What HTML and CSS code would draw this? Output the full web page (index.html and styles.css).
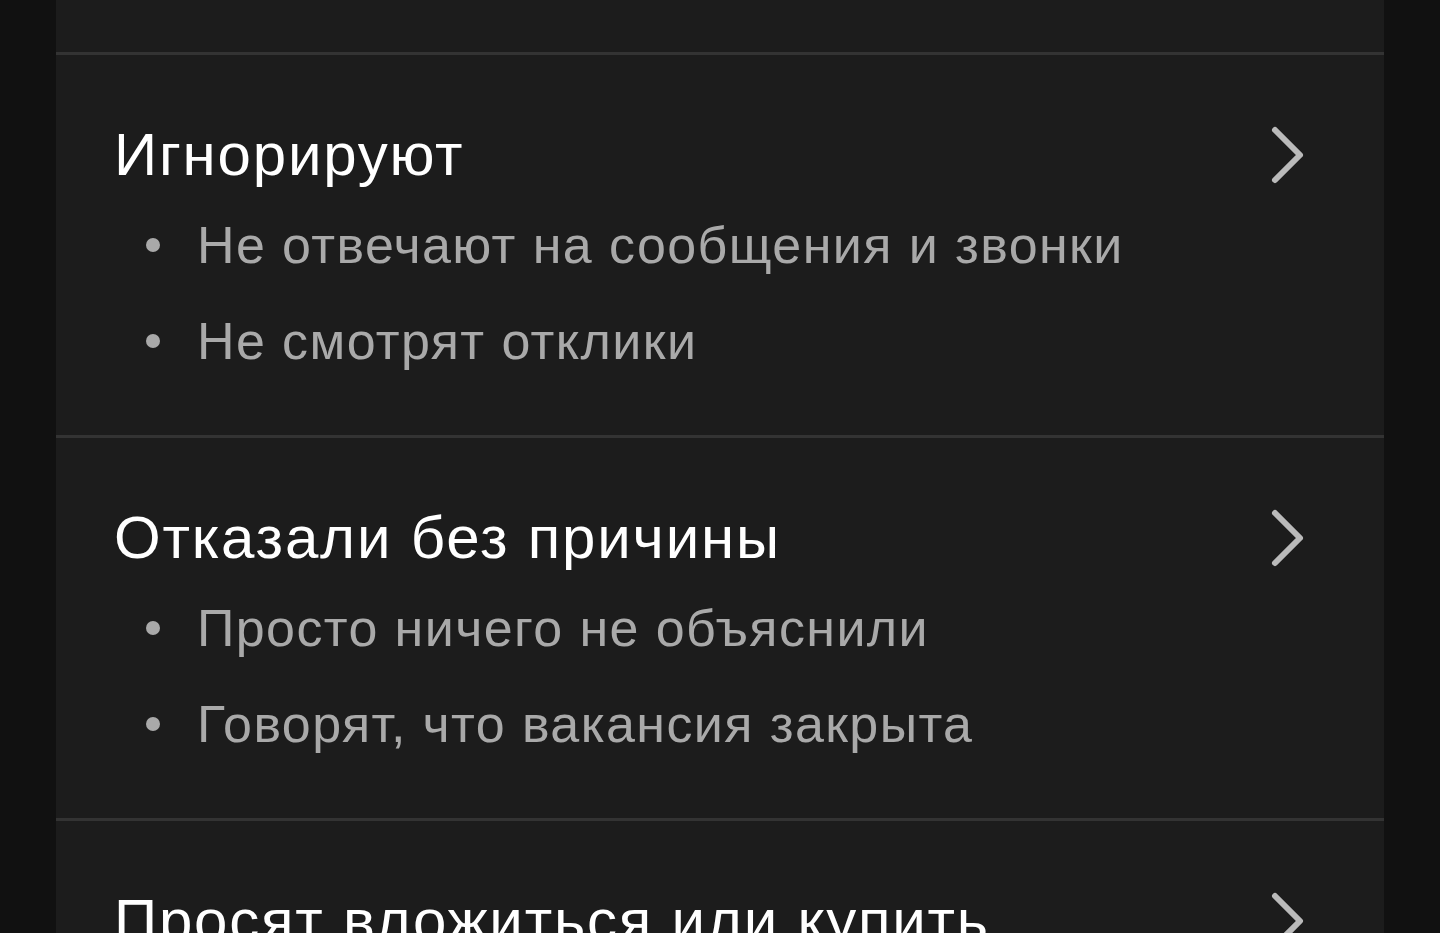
FILE: index.html
```html
<!DOCTYPE html>
<html lang="ru">
<head>
<meta charset="utf-8">
<link rel="stylesheet" href="styles.css">
</head>
<body>
<div class="page">
  <div class="panel">
    <div class="top-gap"></div>
    <section class="item">
      <div class="head">
        <h2 class="title">Игнорируют</h2>
        <svg class="chev" viewBox="0 0 40 60" width="40" height="60"><path d="M6 5 L31 30 L6 55" fill="none" stroke="#bababa" stroke-width="6" stroke-linecap="round" stroke-linejoin="round"/></svg>
      </div>
      <ul class="list">
        <li><span class="dot"></span>Не отвечают на сообщения и звонки</li>
        <li><span class="dot"></span>Не смотрят отклики</li>
      </ul>
    </section>
    <section class="item">
      <div class="head">
        <h2 class="title">Отказали без причины</h2>
        <svg class="chev" viewBox="0 0 40 60" width="40" height="60"><path d="M6 5 L31 30 L6 55" fill="none" stroke="#bababa" stroke-width="6" stroke-linecap="round" stroke-linejoin="round"/></svg>
      </div>
      <ul class="list">
        <li><span class="dot"></span>Просто ничего не объяснили</li>
        <li><span class="dot"></span>Говорят, что вакансия закрыта</li>
      </ul>
    </section>
    <section class="item">
      <div class="head">
        <h2 class="title">Просят вложиться или купить</h2>
        <svg class="chev" viewBox="0 0 40 60" width="40" height="60"><path d="M6 5 L31 30 L6 55" fill="none" stroke="#bababa" stroke-width="6" stroke-linecap="round" stroke-linejoin="round"/></svg>
      </div>
    </section>
  </div>
</div>
</body>
</html>
```
FILE: styles.css
```css
html, body {
  margin: 0;
  padding: 0;
  background: #111111;
  height: 100%;
  overflow: hidden;
}
.page {
  padding: 0 56px;
  font-family: "Liberation Sans", Arial, sans-serif;
}
.panel {
  background: #1c1c1c;
  min-height: 933px;
}
.top-gap {
  height: 52px;
}
.item {
  border-top: 3px solid #333333;
  padding: 65px 75px 46px 58px;
}
.head {
  display: flex;
  align-items: center;
  justify-content: space-between;
  height: 70px;
}
.title {
  margin: 0;
  font-size: 60px;
  line-height: 70px;
  font-weight: 400;
  letter-spacing: 1.8px;
  color: #ffffff;
  white-space: nowrap;
}
.chev {
  display: block;
  flex: none;
}
.list {
  list-style: none;
  margin: 7px 0 0 0;
  padding: 0 0 0 32px;
}
.list li {
  display: flex;
  align-items: center;
  font-size: 52px;
  line-height: 96px;
  letter-spacing: 1.4px;
  color: #a9a9a9;
}
.dot {
  width: 14px;
  height: 14px;
  border-radius: 50%;
  background: #a9a9a9;
  margin-right: 37px;
  flex: none;
}
```
